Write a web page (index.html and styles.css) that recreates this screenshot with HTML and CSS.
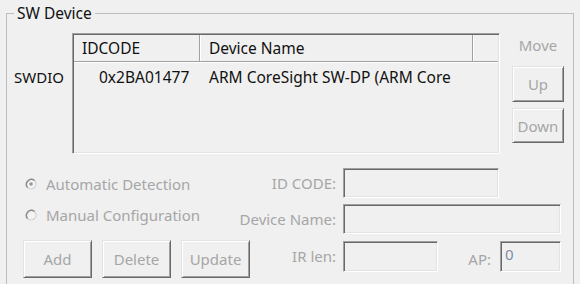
FILE: index.html
```html
<!DOCTYPE html>
<html lang="en">
<head>
  <meta charset="UTF-8">
  <title>SW Device</title>
  <link rel="stylesheet" href="styles.css">
</head>
<body>
  <fieldset class="group">
    <legend>SW Device</legend>
    <div class="group-body">
      <div class="top">
        <div class="port">SWDIO</div>
        <div class="list">
          <div class="list-head">
            <div class="col col-id">IDCODE</div>
            <div class="col col-name">Device Name</div>
            <div class="col col-rest"></div>
          </div>
          <div class="list-row">
            <div class="cell cell-id">0x2BA01477</div>
            <div class="cell cell-name">ARM CoreSight SW-DP (ARM Core</div>
          </div>
        </div>
        <div class="move">
          <div class="move-label">Move</div>
          <button class="btn btn-up" disabled>Up</button>
          <button class="btn btn-down" disabled>Down</button>
        </div>
      </div>

      <div class="bottom">
        <label class="radio radio-auto">
          <svg width="12" height="12" viewBox="0 0 12 12">
            <circle cx="6" cy="6" r="5" fill="#f4f4f4" stroke="#d4d4d4" stroke-width="1.2"/>
            <path d="M2.5 9.5 A5 5 0 0 1 9.5 2.5" fill="none" stroke="#8a8a8a" stroke-width="1.4"/>
            <circle cx="6" cy="6" r="1.8" fill="#9a9a9a"/>
          </svg>
          <span>Automatic Detection</span>
        </label>
        <div class="field-label">ID CODE:</div>
        <div class="field"><div class="edit edit-id"></div></div>

        <label class="radio radio-manual">
          <svg width="12" height="12" viewBox="0 0 12 12">
            <circle cx="6" cy="6" r="5" fill="#f4f4f4" stroke="#d4d4d4" stroke-width="1.2"/>
            <path d="M2.5 9.5 A5 5 0 0 1 9.5 2.5" fill="none" stroke="#8a8a8a" stroke-width="1.4"/>
          </svg>
          <span>Manual Configuration</span>
        </label>
        <div class="field-label">Device Name:</div>
        <div class="field"><div class="edit edit-name"></div></div>

        <div class="actions">
          <button class="btn btn-act" disabled>Add</button>
          <button class="btn btn-act" disabled>Delete</button>
          <button class="btn btn-act" disabled>Update</button>
        </div>
        <div class="field-label field-label-ir">IR len:</div>
        <div class="field field-ir">
          <div class="edit edit-ir"></div>
          <div class="ap">
            <span class="ap-label">AP:</span>
            <div class="edit edit-ap">0</div>
          </div>
        </div>
      </div>
    </div>
  </fieldset>
</body>
</html>
```

FILE: styles.css
```css
body {
  margin: 0;
  background: #f0f0f0;
  font-family: "Noto Sans", "Open Sans", sans-serif;
  font-size: 15px;
  color: #111;
  overflow: hidden;
}

.group {
  box-sizing: border-box;
  width: 568px;
  height: 282px;
  margin: 3px 0 0 6px;
  padding: 0;
  border: 1px solid #bdbdbd;
}

.group legend {
  margin-left: 7px;
  padding: 0 3px;
  line-height: 20px;
  font-size: 15.5px;
}

.group-body {
  padding-top: 10px;
}

/* list + move buttons */
.top {
  display: grid;
  grid-template-columns: 65px 428px 1fr;
}

.port {
  padding-left: 7px;
  margin-top: 34px;
  line-height: 20px;
}

.list {
  box-sizing: border-box;
  height: 121px;
  border: 1px solid;
  border-color: #a0a0a0 #fff #fff #a0a0a0;
  box-shadow: inset 1px 1px #696969, inset -1px -1px #e3e3e3;
  padding: 1px;
  overflow: hidden;
  font-size: 15.5px;
}

.list-head {
  display: flex;
  height: 26px;
  border-bottom: 1px solid #a0a0a0;
  box-shadow: 0 1px #fff;
}

.col {
  line-height: 26px;
  border-right: 1px solid #a0a0a0;
  box-shadow: 1px 0 #fff;
  box-sizing: border-box;
}

.col-id {
  width: 126px;
  padding-left: 8px;
}

.col-name {
  width: 273px;
  padding-left: 9px;
}

.col-rest {
  flex: 1;
  border-right: none;
  box-shadow: none;
}

.list-row {
  display: flex;
  padding-top: 4px;
  line-height: 22px;
}

.cell {
  white-space: nowrap;
  overflow: hidden;
}

.cell-id {
  width: 126px;
  padding-left: 25px;
  box-sizing: border-box;
}

.cell-name {
  width: 273px;
  padding-left: 9px;
  box-sizing: border-box;
}

.move {
  display: flex;
  flex-direction: column;
  padding-left: 12px;
}

.move-label {
  width: 52px;
  text-align: center;
  color: #a6a6a6;
  line-height: 20px;
  margin-top: 2px;
}

/* classic raised buttons */
.btn {
  box-sizing: border-box;
  flex-shrink: 0;
  font: inherit;
  color: #a6a6a6;
  background: #f0f0f0;
  border: 1px solid;
  border-color: #e3e3e3 #696969 #696969 #e3e3e3;
  box-shadow: inset 1px 1px #fff, inset -1px -1px #a0a0a0;
  padding: 0;
}

.btn-up {
  width: 52px;
  height: 36px;
  margin-top: 11px;
}

.btn-down {
  width: 52px;
  height: 35px;
  margin-top: 6px;
}

/* detection / manual entry */
.bottom {
  display: grid;
  grid-template-columns: 230px 106px 218px;
  grid-template-rows: 30px 30px 38px;
  row-gap: 6px;
  margin-top: 14px;
}

.radio {
  display: flex;
  align-items: center;
  gap: 9px;
  padding-left: 18px;
  color: #a6a6a6;
  line-height: 20px;
}

.radio-auto {
  align-self: center;
  margin-top: 2px;
}

.radio-manual {
  align-self: start;
  margin-top: 1px;
}

.field-label {
  text-align: right;
  padding-right: 7px;
  color: #a6a6a6;
  line-height: 20px;
  align-self: center;
}

.field-label-ir {
  align-self: start;
  margin-top: 6px;
}

.edit {
  box-sizing: border-box;
  height: 30px;
  background: #f0f0f0;
  border: 1px solid;
  border-color: #a0a0a0 #fff #fff #a0a0a0;
  box-shadow: inset 1px 1px #696969, inset -1px -1px #e3e3e3;
}

.edit-id {
  width: 156px;
}

.edit-name {
  width: 218px;
}

.field-ir {
  display: flex;
  justify-content: space-between;
  align-items: flex-start;
  padding-top: 1px;
}

.edit-ir {
  width: 95px;
  height: 31px;
}

.ap {
  display: flex;
  align-items: center;
  gap: 9px;
}

.ap-label {
  color: #a6a6a6;
  margin-top: 4px;
}

.edit-ap {
  width: 61px;
  height: 31px;
  padding: 2px 0 0 4px;
  color: #7d8ea8;
  line-height: 20px;
}

.actions {
  display: flex;
  gap: 10px;
  padding-left: 16px;
}

.btn-act {
  width: 69px;
  height: 38px;
}
```
